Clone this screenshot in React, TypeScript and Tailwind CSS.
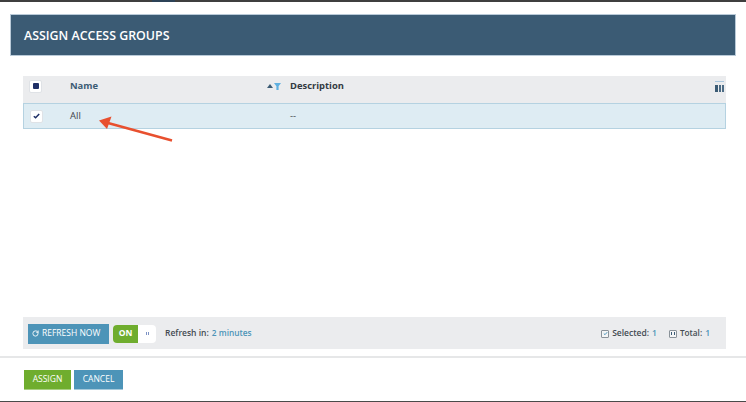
import { RotateCw } from "lucide-react";

function Arrow() {
  return (
    <svg className="absolute left-[96px] top-[116px]" width="80" height="30" viewBox="0 0 80 30" fill="none">
      <path d="M76 24.5 L12 7" stroke="#e8502f" strokeWidth="2.4" />
      <path d="M3 4.5 L15.5 0.5 L11 13 Z" fill="#e8502f" />
    </svg>
  );
}

function ColumnsIcon() {
  return (
    <span className="absolute right-[2px] top-[5px] flex w-[9px] flex-col gap-[3px]">
      <span className="h-px w-full bg-[#a9c6dd]" />
      <span className="flex h-[7px] w-full gap-px">
        <span className="w-[3px] bg-[#3b5b74]" />
        <span className="w-[2px] bg-[#4d6c85]" />
        <span className="w-[2px] bg-[#4d6c85]" />
      </span>
    </span>
  );
}

export default function App() {
  return (
    <div className="relative flex h-[402px] w-[746px] flex-col overflow-hidden bg-white font-['Open_Sans',sans-serif]">
      <div className="h-[2px] shrink-0 bg-[#3f3f3f] pl-[152px]">
        <div className="h-full w-[23px] bg-[#2c4257]" />
      </div>
      <div className="mx-[10px] mt-[12px] flex h-[42px] shrink-0 items-center border border-[#b9cad8] bg-[#3b5b74] pl-[13px] pt-[2px] text-[12.4px] font-semibold text-white">
        ASSIGN ACCESS GROUPS
      </div>

      <div className="mx-[23px] mt-[20px] w-[703px] shrink-0">
        <div className="relative flex h-[27px] items-center bg-[#ebecee] pb-[7px] text-[9.4px] font-bold">
          <span className="ml-[6px] flex h-[13px] w-[13px] items-center justify-center rounded-[2px] border border-[#dfe2e6] bg-white">
            <span className="h-[6px] w-[6px] rounded-[1px] bg-[#1f2f66]" />
          </span>
          <span className="ml-[28px] w-[197px] text-[#3b5b74]">Name</span>
          <span className="flex w-[23px] items-center gap-px">
            <svg width="6" height="4" viewBox="0 0 6 4">
              <path d="M3 0 L6 4 H0 Z" fill="#3b5b74" />
            </svg>
            <svg width="7" height="7" viewBox="0 0 7 7">
              <path d="M0 0 H7 L4.6 3.2 V7 H2.4 V3.2 Z" fill="#5fb0e0" />
            </svg>
          </span>
          <span className="text-[#333a42]">Description</span>
          <ColumnsIcon />
        </div>
        <div className="flex h-[26px] items-center border border-[#b5d2e1] bg-[#deecf3] text-[9.5px] text-[#3f464d]">
          <span className="ml-[6px] flex h-[13px] w-[13px] items-center justify-center rounded-[2px] border border-[#dfe2e6] bg-white">
            <svg width="7" height="6" viewBox="0 0 7 6" fill="none">
              <path d="M0.8 3.2 L2.6 4.8 L6.2 1" stroke="#1f2f66" strokeWidth="1.5" />
            </svg>
          </span>
          <span className="ml-[27px] w-[220px]">All</span>
          <span>--</span>
        </div>
      </div>

      <div className="mx-[23px] mt-[188px] flex h-[32px] w-[703px] shrink-0 items-center bg-[#ebecee] pl-[5px] pr-[16px] pt-[1px] text-[8.5px]">
        <button className="flex h-[20px] w-[81px] items-center gap-[3px] bg-[#4d94b8] pl-[4px] text-[8.5px] font-medium text-white">
          <RotateCw size={7} strokeWidth={3} />
          REFRESH NOW
        </button>
        <span className="ml-[4px] flex h-[18px] w-[43px] overflow-hidden rounded-[4px] bg-white">
          <span className="flex w-[25px] items-center justify-center bg-[#6fad2e] font-bold text-white">ON</span>
          <span className="flex flex-1 items-center justify-center gap-px">
            <span className="h-[3px] w-px bg-[#7d92c4]" />
            <span className="h-[3px] w-px bg-[#7d92c4]" />
          </span>
        </span>
        <span className="ml-[9px] font-semibold text-[#444b52]">Refresh in:</span>
        <span className="ml-[3px] text-[8.3px] font-semibold text-[#4d94b8]">2 minutes</span>
        <span className="ml-auto flex h-[8px] w-[8px] items-center justify-center rounded-[1px] border border-[#8a9299] bg-[#f4f5f6]">
          <svg width="5" height="5" viewBox="0 0 5 5" fill="none">
            <path d="M0.8 2.5 L2 3.7 L4.2 1.2" stroke="#4d94b8" strokeWidth="1" />
          </svg>
        </span>
        <span className="ml-[3px] font-semibold text-[#444b52]">Selected:</span>
        <span className="ml-[3px] font-semibold text-[#4d94b8]">1</span>
        <span className="ml-[12px] flex h-[8px] w-[8px] items-center justify-center rounded-[1px] border border-[#8a9299] bg-[#f4f5f6]">
          <span className="h-[3px] w-[4px] border-x border-[#3b5b74]" />
        </span>
        <span className="ml-[3px] text-[8.2px] font-semibold text-[#444b52]">Total:</span>
        <span className="ml-[3px] font-semibold text-[#4d94b8]">1</span>
      </div>

      <div className="mt-[7px] h-[2px] shrink-0 bg-[#e6e7e8]" />

      <div className="ml-[24px] mt-[12px] flex shrink-0 gap-[3px] text-[8.5px] font-medium text-white">
        <button className="flex h-[20px] w-[47px] items-center justify-center border-b border-[#a9cf82] bg-[#6fad2e]">ASSIGN</button>
        <button className="flex h-[20px] w-[49px] items-center justify-center border-b border-[#a7cadb] bg-[#4d94b8]">CANCEL</button>
      </div>

      <div className="absolute bottom-0 left-0 h-px w-full bg-[#4a4a4a]" />
      <Arrow />
    </div>
  );
}
